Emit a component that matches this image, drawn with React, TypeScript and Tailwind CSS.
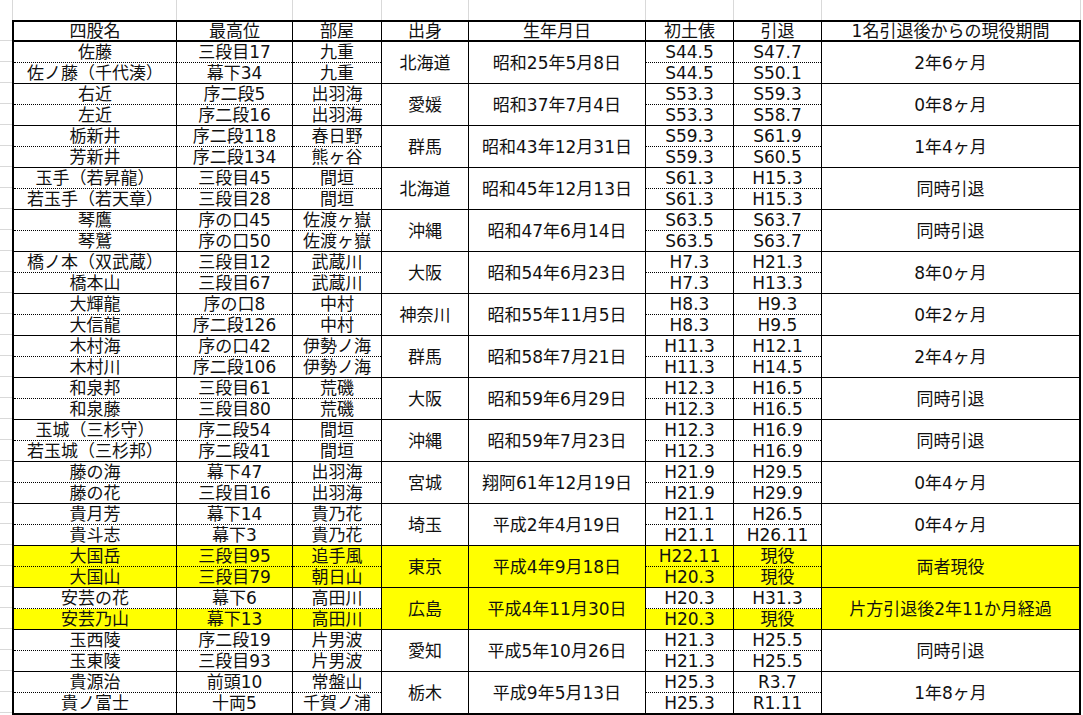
import React from "react";

type Group = {
  a: [string, string, string];
  b: [string, string, string];
  pref: string;
  birth: string;
  s: [string, string];
  t: [string, string];
  period: string;
  y1?: boolean;
  y2?: boolean;
  ym?: boolean;
};

const groups: Group[] = [
  { a: ["佐藤", "三段目17", "九重"], b: ["佐ノ藤（千代湊）", "幕下34", "九重"], pref: "北海道", birth: "昭和25年5月8日", s: ["S44.5", "S47.7"], t: ["S44.5", "S50.1"], period: "2年6ヶ月" },
  { a: ["右近", "序二段5", "出羽海"], b: ["左近", "序二段16", "出羽海"], pref: "愛媛", birth: "昭和37年7月4日", s: ["S53.3", "S59.3"], t: ["S53.3", "S58.7"], period: "0年8ヶ月" },
  { a: ["栃新井", "序二段118", "春日野"], b: ["芳新井", "序二段134", "熊ヶ谷"], pref: "群馬", birth: "昭和43年12月31日", s: ["S59.3", "S61.9"], t: ["S59.3", "S60.5"], period: "1年4ヶ月" },
  { a: ["玉手（若昇龍）", "三段目45", "間垣"], b: ["若玉手（若天章）", "三段目28", "間垣"], pref: "北海道", birth: "昭和45年12月13日", s: ["S61.3", "H15.3"], t: ["S61.3", "H15.3"], period: "同時引退" },
  { a: ["琴鷹", "序の口45", "佐渡ヶ嶽"], b: ["琴鷲", "序の口50", "佐渡ヶ嶽"], pref: "沖縄", birth: "昭和47年6月14日", s: ["S63.5", "S63.7"], t: ["S63.5", "S63.7"], period: "同時引退" },
  { a: ["橋ノ本（双武蔵）", "三段目12", "武蔵川"], b: ["橋本山", "三段目67", "武蔵川"], pref: "大阪", birth: "昭和54年6月23日", s: ["H7.3", "H21.3"], t: ["H7.3", "H13.3"], period: "8年0ヶ月" },
  { a: ["大輝龍", "序の口8", "中村"], b: ["大信龍", "序二段126", "中村"], pref: "神奈川", birth: "昭和55年11月5日", s: ["H8.3", "H9.3"], t: ["H8.3", "H9.5"], period: "0年2ヶ月" },
  { a: ["木村海", "序の口42", "伊勢ノ海"], b: ["木村川", "序二段106", "伊勢ノ海"], pref: "群馬", birth: "昭和58年7月21日", s: ["H11.3", "H12.1"], t: ["H11.3", "H14.5"], period: "2年4ヶ月" },
  { a: ["和泉邦", "三段目61", "荒磯"], b: ["和泉藤", "三段目80", "荒磯"], pref: "大阪", birth: "昭和59年6月29日", s: ["H12.3", "H16.5"], t: ["H12.3", "H16.5"], period: "同時引退" },
  { a: ["玉城（三杉守）", "序二段54", "間垣"], b: ["若玉城（三杉邦）", "序二段41", "間垣"], pref: "沖縄", birth: "昭和59年7月23日", s: ["H12.3", "H16.9"], t: ["H12.3", "H16.9"], period: "同時引退" },
  { a: ["藤の海", "幕下47", "出羽海"], b: ["藤の花", "三段目16", "出羽海"], pref: "宮城", birth: "翔阿61年12月19日", s: ["H21.9", "H29.5"], t: ["H21.9", "H29.9"], period: "0年4ヶ月" },
  { a: ["貴月芳", "幕下14", "貴乃花"], b: ["貴斗志", "幕下3", "貴乃花"], pref: "埼玉", birth: "平成2年4月19日", s: ["H21.1", "H26.5"], t: ["H21.1", "H26.11"], period: "0年4ヶ月" },
  { a: ["大国岳", "三段目95", "追手風"], b: ["大国山", "三段目79", "朝日山"], pref: "東京", birth: "平成4年9月18日", s: ["H22.11", "現役"], t: ["H20.3", "現役"], period: "両者現役", y1: true, y2: true, ym: true },
  { a: ["安芸の花", "幕下6", "高田川"], b: ["安芸乃山", "幕下13", "高田川"], pref: "広島", birth: "平成4年11月30日", s: ["H20.3", "H31.3"], t: ["H20.3", "現役"], period: "片方引退後2年11か月経過", y2: true, ym: true },
  { a: ["玉西陵", "序二段19", "片男波"], b: ["玉東陵", "三段目93", "片男波"], pref: "愛知", birth: "平成5年10月26日", s: ["H21.3", "H25.5"], t: ["H21.3", "H25.5"], period: "同時引退" },
  { a: ["貴源治", "前頭10", "常盤山"], b: ["貴ノ富士", "十両5", "千賀ノ浦"], pref: "栃木", birth: "平成9年5月13日", s: ["H25.3", "R3.7"], t: ["H25.3", "R1.11"], period: "1年8ヶ月" },
];

const W = [
  "w-[163px]",
  "w-[116px]",
  "w-[89px]",
  "w-[87px]",
  "w-[177px]",
  "w-[88px]",
  "w-[88px]",
  "w-[257px]",
];

const headers = ["四股名", "最高位", "部屋", "出身", "生年月日", "初土俵", "引退", "1名引退後からの現役期間"];

const topW = [
  "w-[13px]",
  "w-[164px]",
  "w-[116px]",
  "w-[89px]",
  "w-[87px]",
  "w-[177px]",
  "w-[88px]",
  "w-[88px]",
  "w-[259px]",
];

function Split({ w, top, bottom, y1, y2 }: { w: string; top: string; bottom: string; y1?: boolean; y2?: boolean }) {
  return (
    <div className={`${w} shrink-0 flex flex-col border-r border-black`}>
      <div className={`h-[21px] shrink-0 border-b border-dotted border-black flex items-center justify-center whitespace-nowrap pt-[1px] ${y1 ? "bg-[#ffff00]" : ""}`}>
        {top}
      </div>
      <div className={`flex-1 flex items-center justify-center whitespace-nowrap pt-[1px] ${y2 ? "bg-[#ffff00]" : ""}`}>
        {bottom}
      </div>
    </div>
  );
}

function Merged({ w, text, y, last }: { w: string; text: string; y?: boolean; last?: boolean }) {
  return (
    <div className={`${w} shrink-0 flex items-center justify-center whitespace-nowrap pt-[1px] ${last ? "" : "border-r border-black"} ${y ? "bg-[#ffff00]" : ""}`}>
      {text}
    </div>
  );
}

export default function App() {
  return (
    <div className="w-[1083px] h-[715px] overflow-hidden bg-white text-[#111] text-[17px] leading-none font-['DejaVu_Sans','Noto_Sans_CJK_JP','Noto_Sans_CJK_SC',sans-serif]">
      <div className="flex h-[20px]">
        {topW.map((w, i) => (
          <div key={i} className={`${w} shrink-0 h-full border-r border-[#d9d9d9]`} />
        ))}
      </div>
      <div className="flex">
        <div className="w-[12px] shrink-0 flex flex-col">
          {Array.from({ length: 33 }).map((_, i) => (
            <div key={i} className="h-[21px] shrink-0 border-b border-[#d9d9d9]" />
          ))}
        </div>
        <div className="w-[1069px] shrink-0 border-2 border-black">
          <div className="flex h-[20px] border-b-2 border-black">
            {headers.map((h, i) => (
              <div
                key={i}
                className={`${W[i]} shrink-0 flex items-center justify-center whitespace-nowrap pt-[1px] ${i < 7 ? "border-r border-black" : ""}`}
              >
                {h}
              </div>
            ))}
          </div>
          {groups.map((g, gi) => {
            const last = gi === groups.length - 1;
            return (
              <div key={gi} className={`flex ${last ? "h-[41px]" : "h-[42px] border-b border-black"}`}>
                <Split w={W[0]} top={g.a[0]} bottom={g.b[0]} y1={g.y1} y2={g.y2} />
                <Split w={W[1]} top={g.a[1]} bottom={g.b[1]} y1={g.y1} y2={g.y2} />
                <Split w={W[2]} top={g.a[2]} bottom={g.b[2]} y1={g.y1} y2={g.y2} />
                <Merged w={W[3]} text={g.pref} y={g.ym} />
                <Merged w={W[4]} text={g.birth} y={g.ym} />
                <Split w={W[5]} top={g.s[0]} bottom={g.t[0]} y1={g.y1} y2={g.y2} />
                <Split w={W[6]} top={g.s[1]} bottom={g.t[1]} y1={g.y1} y2={g.y2} />
                <Merged w={W[7]} text={g.period} y={g.ym} last />
              </div>
            );
          })}
        </div>
      </div>
    </div>
  );
}
